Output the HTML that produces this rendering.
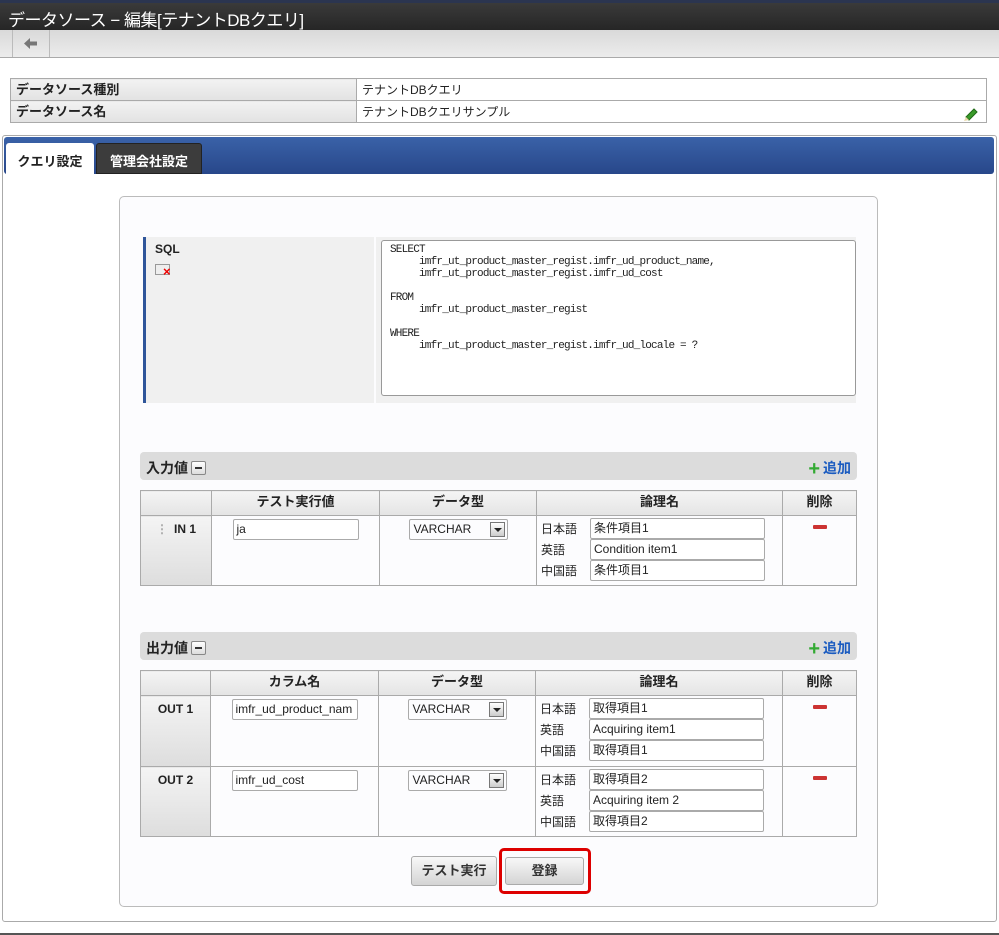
<!DOCTYPE html>
<html><head><meta charset="utf-8"><style>
*{box-sizing:border-box;margin:0;padding:0}
body{width:999px;height:935px;position:relative;background:#fff;font-family:"Liberation Sans","Noto Sans CJK JP",sans-serif;font-size:12px;color:#222;overflow:hidden}
.a{position:absolute}
.title{left:0;top:0;width:999px;height:30px;background:linear-gradient(#3a3a3a,#262626);border-top:3px solid #2b3550;color:#fff;font-size:17px;padding:3px 0 0 8px;font-weight:normal;letter-spacing:-0.5px}
.tool{left:0;top:30px;width:999px;height:28px;background:linear-gradient(#d9d9d9,#ececec);border-bottom:1px solid #aaa}
.info{left:10px;top:78px;width:977px;border-collapse:collapse}
.info td{border:1px solid #aaa;height:22px;padding:0 5px;line-height:20px}
.info td.l{background:linear-gradient(#f2f2f2,#e2e2e2);font-weight:bold;width:346px;font-size:13px}
.hd{background:#dcdcdc;border-radius:4px;height:28px;font-weight:bold;font-size:14px;padding:6px 0 0 6px}
.mini{display:inline-block;width:15px;height:14px;border:1px solid #888;border-radius:2px;background:linear-gradient(#fff,#ddd);vertical-align:-2px;margin-left:3px;position:relative}
.mini:after{content:"";position:absolute;left:3px;top:5px;width:7px;height:2px;background:#333}
table.g{border-collapse:collapse;position:absolute;left:140px;width:717px}
table.g td,table.g th{border:1px solid #aaa;vertical-align:top}
table.g th{background:linear-gradient(#f4f4f4,#e4e4e4);height:25px;font-size:13px}
table.g td.k{background:linear-gradient(#f4f4f4,#ddd);text-align:center;font-weight:bold;padding-top:6px}
.in{display:inline-block;border:1px solid #aaa;border-radius:2px;height:21px;font-size:12px;line-height:17px;padding:1px 3px;background:#fff;text-align:left;vertical-align:top;white-space:nowrap;overflow:hidden}
.sel{display:inline-block;width:99px;height:21px;border:1px solid #aaa;border-radius:2px;position:relative;padding:2px 4px;text-align:left}
.sel i{position:absolute;right:2px;top:2px;width:15px;height:15px;border:1px solid #777;background:linear-gradient(#fff,#ccc)}
.sel i:after{content:"";position:absolute;left:3px;top:5px;border:4px solid transparent;border-top:4px solid #222}
.lg{font-size:12px;padding-top:2px}
.lg div{height:21px;padding-left:4px;display:flex;align-items:center}
.lg span.t{display:inline-block;width:49px}
.del{display:block;margin:9px auto 0;width:14px;height:4px;background:#c33;border-radius:1px}
.add{color:#1a5bc0;font-weight:bold;font-size:14px;position:absolute;right:6px;top:6px}
.add b{color:#3a3;font-size:20px;vertical-align:-2px;margin-right:3px}
.btn{border:1px solid #aaa;border-radius:3px;background:linear-gradient(#f8f8f8,#d4d4d4);font-size:13px;text-align:center;font-weight:bold;color:#333}
</style></head><body>
<div class="a title">データソース − 編集[テナントDBクエリ]</div>
<div class="a tool"><div class="a" style="left:12px;top:0;width:38px;height:27px;border-left:1px solid #bbb;border-right:1px solid #bbb"><svg class="a" style="left:11px;top:8px" width="14" height="11" viewBox="0 0 14 11"><path d="M0 5.5 L6 0 L6 3.5 L13 3.5 L13 7.5 L6 7.5 L6 11 Z" fill="#777"/></svg></div></div>
<table class="a info"><tr><td class="l">データソース種別</td><td>テナントDBクエリ</td></tr><tr><td class="l">データソース名</td><td>テナントDBクエリサンプル<svg style="position:absolute;right:8px;top:27px" width="16" height="16" viewBox="0 0 16 16"><path d="M3 11 L11 3 L14 6 L6 14 Z" fill="#3a9a2a" stroke="#1f6a16"/><path d="M3 11 L6 14 L1 15 Z" fill="#e8d8a8"/></svg></td></tr></table>
<div class="a" style="left:2px;top:135px;width:995px;height:787px;border:1px solid #aaa;border-radius:3px"></div>
<div class="a" style="left:4px;top:137px;width:990px;height:37px;background:linear-gradient(#3a62a8,#28478a);border-radius:3px"></div>
<div class="a" style="left:6px;top:143px;width:88px;height:31px;background:#fff;border-radius:3px 3px 0 0;font-weight:bold;font-size:13px;text-align:center;padding-top:8px">クエリ設定</div>
<div class="a" style="left:96px;top:143px;width:106px;height:31px;background:#3c3c3c;border:1px solid #222;border-radius:3px 3px 0 0;color:#fff;font-weight:bold;font-size:13px;text-align:center;padding-top:7px">管理会社設定</div>
<div class="a" style="left:119px;top:196px;width:759px;height:711px;border:1px solid #bbb;border-radius:5px;background:#fcfcfe"></div>
<div class="a" style="left:143px;top:237px;width:231px;height:166px;background:#f0f0f0;border-left:3px solid #2f559a;padding:5px 9px;font-weight:bold">SQL<div style="margin-top:8px;width:15px;height:11px;border:1px solid #999;background:#eee;position:relative"><span style="position:absolute;left:7px;top:2px;color:#e00;font-size:13px;font-weight:bold;line-height:10px">×</span></div></div>
<div class="a" style="left:376px;top:237px;width:480px;height:166px;background:#f0f0f0"></div>
<div class="a" style="left:381px;top:240px;width:475px;height:156px;border:1px solid #999;border-radius:3px;background:#fff;font-family:'Liberation Mono',monospace;font-size:11px;line-height:12px;padding:3px 8px;white-space:pre;letter-spacing:-0.8px">SELECT
     imfr_ut_product_master_regist.imfr_ud_product_name,
     imfr_ut_product_master_regist.imfr_ud_cost

FROM
     imfr_ut_product_master_regist

WHERE
     imfr_ut_product_master_regist.imfr_ud_locale = ?</div>
<div class="a hd" style="left:140px;top:452px;width:717px">入力値<span class="mini"></span><span class="add"><b>+</b>追加</span></div>
<table class="g" style="top:490px">
<tr><th style="width:71px"></th><th style="width:168px">テスト実行値</th><th style="width:157px">データ型</th><th style="width:246px">論理名</th><th>削除</th></tr>
<tr style="height:70px"><td class="k"><span style="color:#aaa;margin-right:6px">⋮</span>IN 1</td><td style="text-align:center;padding-top:3px"><span class="in" style="width:126px">ja</span></td><td style="text-align:center;padding-top:3px"><span class="sel">VARCHAR<i></i></span></td><td class="lg"><div><span class="t">日本語</span><span class="in" style="width:175px">条件項目1</span></div><div><span class="t">英語</span><span class="in" style="width:175px">Condition item1</span></div><div><span class="t">中国語</span><span class="in" style="width:175px">条件项目1</span></div></td><td><span class="del"></span></td></tr>
</table>
<div class="a hd" style="left:140px;top:632px;width:717px">出力値<span class="mini"></span><span class="add"><b>+</b>追加</span></div>
<table class="g" style="top:670px">
<tr><th style="width:70px"></th><th style="width:168px">カラム名</th><th style="width:157px">データ型</th><th style="width:247px">論理名</th><th>削除</th></tr>
<tr style="height:71px"><td class="k">OUT 1</td><td style="text-align:center;padding-top:3px"><span class="in" style="width:126px">imfr_ud_product_nam</span></td><td style="text-align:center;padding-top:3px"><span class="sel">VARCHAR<i></i></span></td><td class="lg"><div><span class="t">日本語</span><span class="in" style="width:175px">取得項目1</span></div><div><span class="t">英語</span><span class="in" style="width:175px">Acquiring item1</span></div><div><span class="t">中国語</span><span class="in" style="width:175px">取得項目1</span></div></td><td><span class="del"></span></td></tr>
<tr style="height:70px"><td class="k">OUT 2</td><td style="text-align:center;padding-top:3px"><span class="in" style="width:126px">imfr_ud_cost</span></td><td style="text-align:center;padding-top:3px"><span class="sel">VARCHAR<i></i></span></td><td class="lg"><div><span class="t">日本語</span><span class="in" style="width:175px">取得項目2</span></div><div><span class="t">英語</span><span class="in" style="width:175px">Acquiring item 2</span></div><div><span class="t">中国語</span><span class="in" style="width:175px">取得項目2</span></div></td><td><span class="del"></span></td></tr>
</table>
<div class="a btn" style="left:411px;top:856px;width:86px;height:30px;line-height:28px">テスト実行</div>
<div class="a" style="left:499px;top:848px;width:92px;height:46px;border:3px solid #d00;border-radius:5px"></div>
<div class="a btn" style="left:505px;top:857px;width:79px;height:28px;line-height:26px">登録</div>
<div class="a" style="left:0;top:933px;width:999px;height:2px;background:#555"></div>
</body></html>
